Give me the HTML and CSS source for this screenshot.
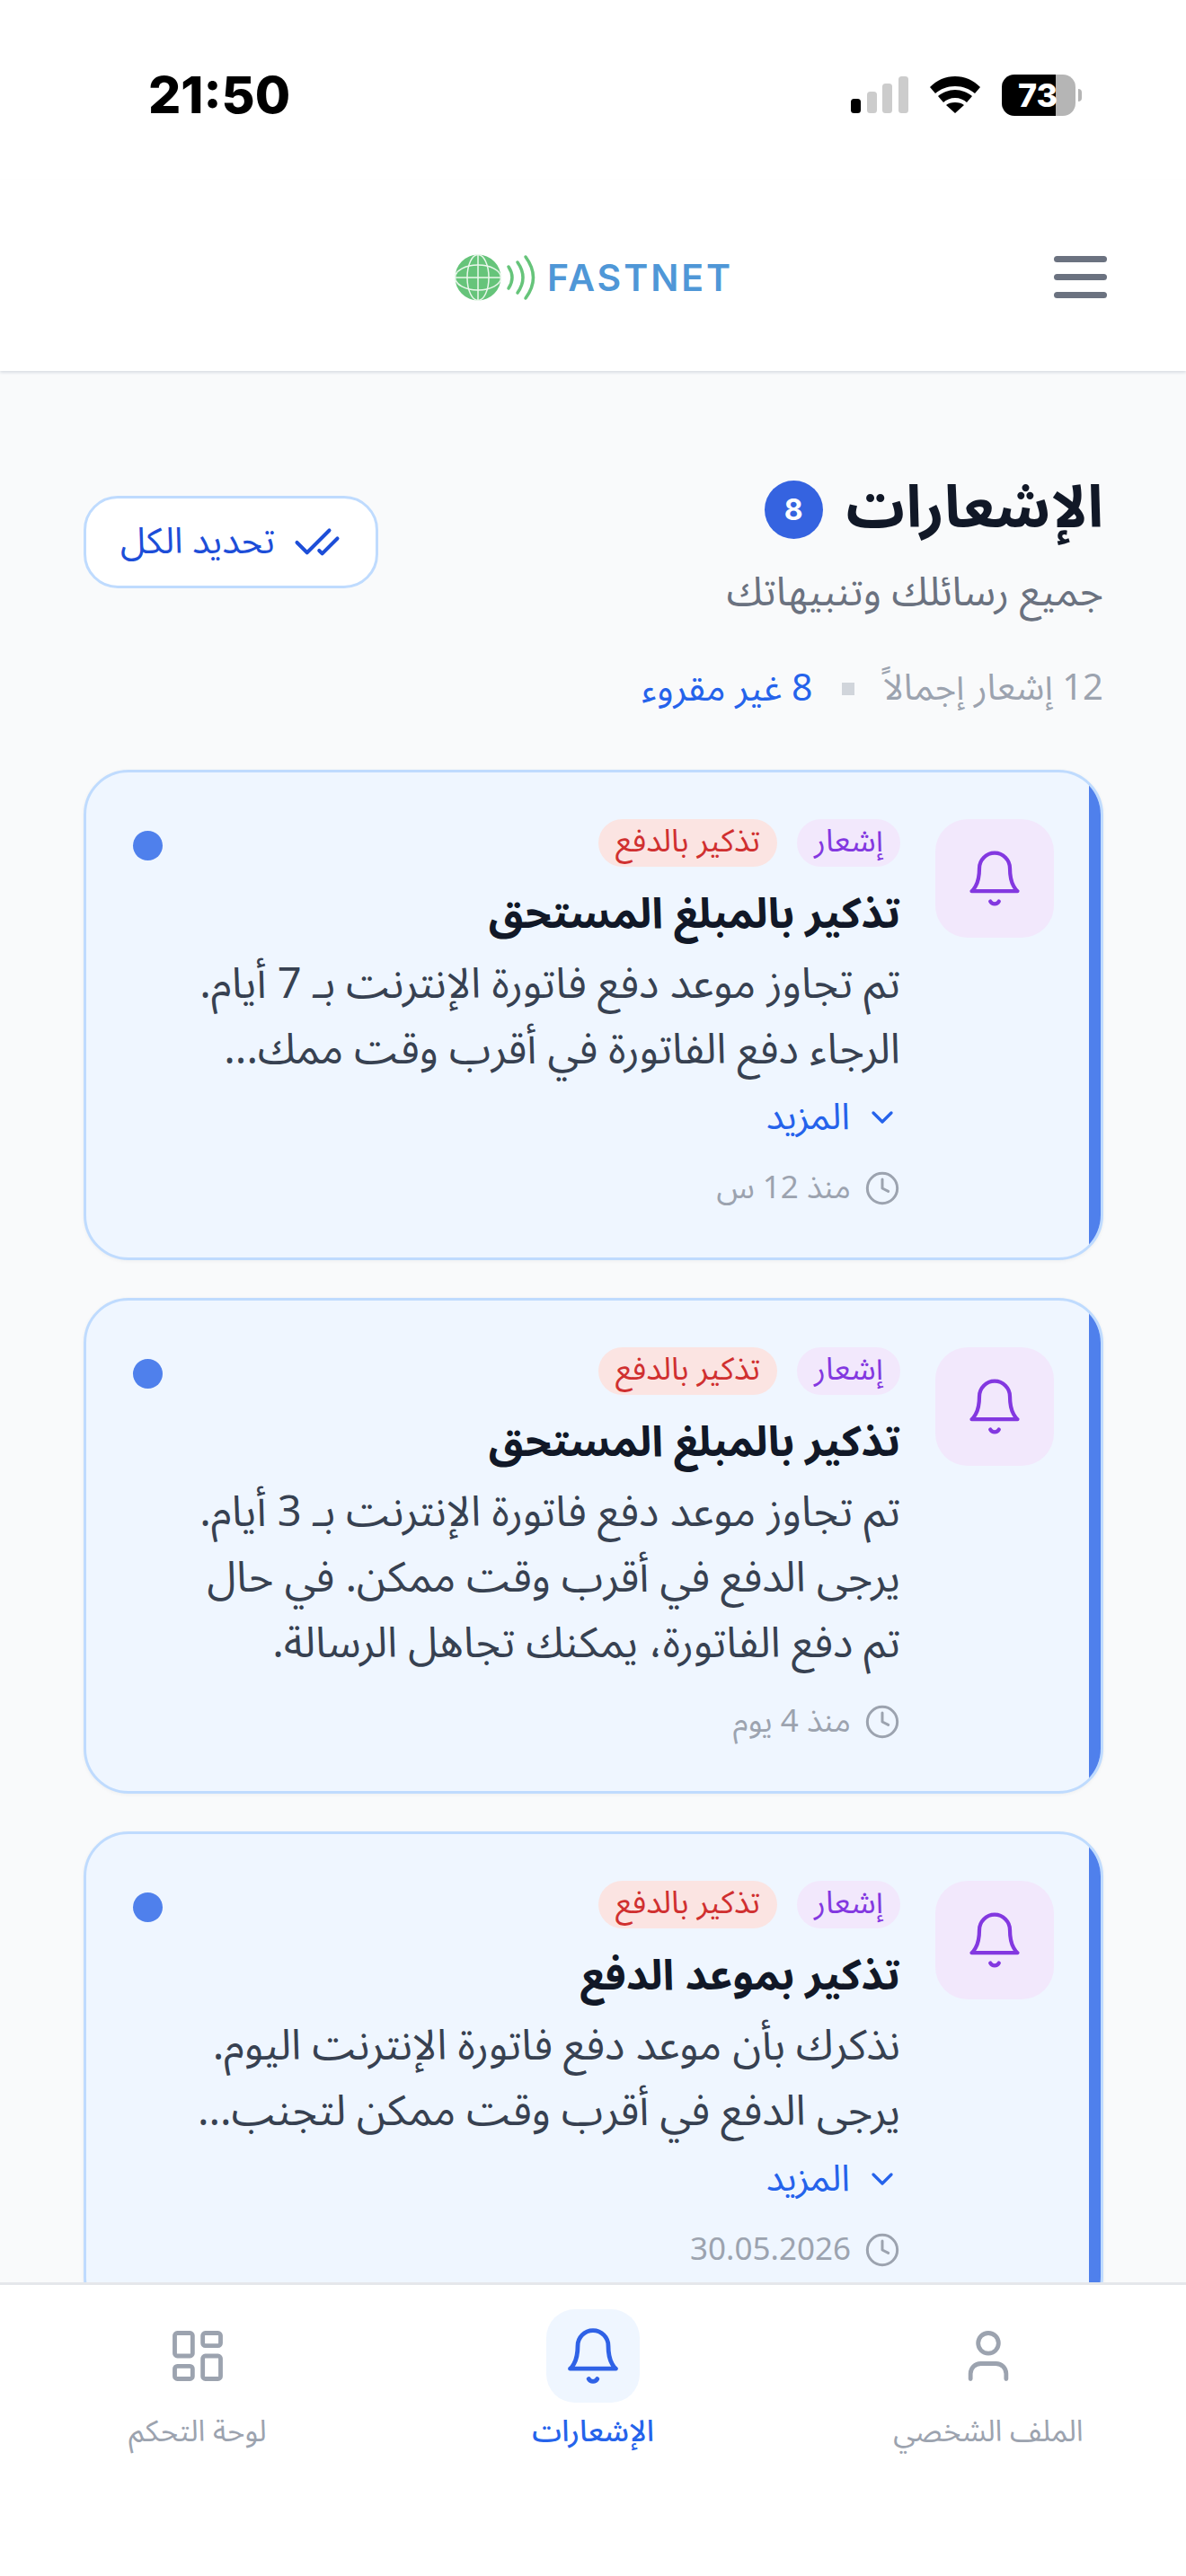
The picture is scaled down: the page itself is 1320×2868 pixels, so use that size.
FILE: index.html
```html
<!DOCTYPE html>
<html lang="ar" dir="rtl">
<head>
<meta charset="utf-8">
<title>الإشعارات</title>
<link rel="stylesheet" href="styles.css">
</head>
<body>
<div class="phone">
  <div class="status" dir="ltr">
    <span class="time">21:50</span>
    <div class="status-icons">
      <svg class="signal" width="64" height="41" viewBox="0 0 64 41"><rect x="0" y="25" width="11" height="16" rx="3.500" fill="#000"/><rect x="18" y="17" width="11" height="24" rx="3.500" fill="#ccc"/><rect x="35" y="8" width="11" height="33" rx="3.500" fill="#ccc"/><rect x="53" y="0" width="11" height="41" rx="3.500" fill="#ccc"/></svg>
      <svg class="wifi" width="56" height="41" viewBox="0 0 56 41"><path d="M28 0C17 0 8 4 0 12l6 7c6-5 13-8 22-8s16 3 22 8l6-7C48 4 39 0 28 0zM28 15c-7 0-14 3-19 7l6 7c3-3 8-5 13-5s10 2 13 5l6-7c-5-4-12-7-19-7zM28 29c-4 0-8 1-10 3l10 9 10-9c-2-2-6-3-10-3z" fill="#000"/></svg>
      <div class="battery"><span class="battery-num">73</span></div>
      <span class="battery-cap"></span>
    </div>
  </div>
  <header class="top">
    <div class="burger"><span></span><span></span><span></span></div>
    <svg class="logo" width="308" height="52" viewBox="0 0 308 52">
      <circle cx="26" cy="26" r="25.500" fill="#66c47a"/>
      <g fill="none" stroke="#eaf7ec" stroke-width="1.500"><ellipse cx="26" cy="26" rx="12" ry="25.500"/><ellipse cx="26" cy="26" rx="25.500" ry="14"/><path d="M1 26h50M26 1v50"/></g>
      <g fill="none" stroke="#66c47a" stroke-width="3.500" stroke-linecap="round"><path d="M60 14q8 12 0 24M70 9q12 17 0 34M79 3q17 23 0 46"/></g>
      <text x="103" y="41" class="logo-text" textLength="204" lengthAdjust="spacing">FASTNET</text>
    </svg>
    <span class="top-spacer"></span>
  </header>
  <main class="content">
    <div class="head">
      <div>
        <div class="title-row"><h1>الإشعارات</h1><span class="count">8</span></div>
        <p class="sub">جميع رسائلك وتنبيهاتك</p>
      </div>
      <button class="mark-all">
        <svg width="54" height="54" viewBox="0 0 24 24" fill="none" stroke="#1d4ed8" stroke-width="1.800" stroke-linecap="round" stroke-linejoin="round"><path d="M18 6 7 17l-5-5M22 10l-7.500 7.500L13 16"/></svg>
        <span>تحديد الكل</span>
      </button>
    </div>
    <div class="stats"><span class="total">12 إشعار إجمالاً</span><i class="sep"></i><span class="unread">8 غير مقروء</span></div>

    <article class="card">
      <div class="icon-box"><svg width="68" height="68" viewBox="0 0 24 24" fill="none" stroke="#8338e0" stroke-width="1.500" stroke-linecap="round" stroke-linejoin="round"><path d="M6 8a6 6 0 0 1 12 0c0 7 3 9 3 9H3s3-2 3-9M10.300 21a1.940 1.940 0 0 0 3.400 0"/></svg></div>
      <div class="body">
        <div class="tags"><span class="tag purple">إشعار</span><span class="tag red">تذكير بالدفع</span></div>
        <h2>تذكير بالمبلغ المستحق</h2>
        <p class="msg">تم تجاوز موعد دفع فاتورة الإنترنت بـ 7 أيام.<br>الرجاء دفع الفاتورة في أقرب وقت ممك...</p>
        <div class="more"><svg width="40" height="40" viewBox="0 0 24 24" fill="none" stroke="#2563eb" stroke-width="2" stroke-linecap="round" stroke-linejoin="round"><path d="M6 9l6 6 6-6"/></svg><span>المزيد</span></div>
        <div class="when"><svg width="40" height="40" viewBox="0 0 24 24" fill="none" stroke="#9ca3af" stroke-width="1.800" stroke-linecap="round" stroke-linejoin="round"><circle cx="12" cy="12" r="10"/><path d="M12 6v6l4 2"/></svg><span>منذ 12 س</span></div>
      </div>
      <span class="dot"></span>
    </article>

    <article class="card">
      <div class="icon-box"><svg width="68" height="68" viewBox="0 0 24 24" fill="none" stroke="#8338e0" stroke-width="1.500" stroke-linecap="round" stroke-linejoin="round"><path d="M6 8a6 6 0 0 1 12 0c0 7 3 9 3 9H3s3-2 3-9M10.300 21a1.940 1.940 0 0 0 3.400 0"/></svg></div>
      <div class="body">
        <div class="tags"><span class="tag purple">إشعار</span><span class="tag red">تذكير بالدفع</span></div>
        <h2>تذكير بالمبلغ المستحق</h2>
        <p class="msg">تم تجاوز موعد دفع فاتورة الإنترنت بـ 3 أيام.<br>يرجى الدفع في أقرب وقت ممكن. في حال<br>تم دفع الفاتورة، يمكنك تجاهل الرسالة.</p>
        <div class="when"><svg width="40" height="40" viewBox="0 0 24 24" fill="none" stroke="#9ca3af" stroke-width="1.800" stroke-linecap="round" stroke-linejoin="round"><circle cx="12" cy="12" r="10"/><path d="M12 6v6l4 2"/></svg><span>منذ 4 يوم</span></div>
      </div>
      <span class="dot"></span>
    </article>

    <article class="card">
      <div class="icon-box"><svg width="68" height="68" viewBox="0 0 24 24" fill="none" stroke="#8338e0" stroke-width="1.500" stroke-linecap="round" stroke-linejoin="round"><path d="M6 8a6 6 0 0 1 12 0c0 7 3 9 3 9H3s3-2 3-9M10.300 21a1.940 1.940 0 0 0 3.400 0"/></svg></div>
      <div class="body">
        <div class="tags"><span class="tag purple">إشعار</span><span class="tag red">تذكير بالدفع</span></div>
        <h2>تذكير بموعد الدفع</h2>
        <p class="msg">نذكرك بأن موعد دفع فاتورة الإنترنت اليوم.<br>يرجى الدفع في أقرب وقت ممكن لتجنب...</p>
        <div class="more"><svg width="40" height="40" viewBox="0 0 24 24" fill="none" stroke="#2563eb" stroke-width="2" stroke-linecap="round" stroke-linejoin="round"><path d="M6 9l6 6 6-6"/></svg><span>المزيد</span></div>
        <div class="when"><svg width="40" height="40" viewBox="0 0 24 24" fill="none" stroke="#9ca3af" stroke-width="1.800" stroke-linecap="round" stroke-linejoin="round"><circle cx="12" cy="12" r="10"/><path d="M12 6v6l4 2"/></svg><span>30.05.2026</span></div>
      </div>
      <span class="dot"></span>
    </article>
  </main>
  <nav class="tabs">
    <div class="tab">
      <div class="tab-icon"><svg width="68" height="68" viewBox="0 0 24 24" fill="none" stroke="#9ca3af" stroke-width="1.700" stroke-linecap="round" stroke-linejoin="round"><circle cx="12" cy="7" r="4"/><path d="M19 21v-2a4 4 0 0 0-4-4H9a4 4 0 0 0-4 4v2"/></svg></div>
      <span>الملف الشخصي</span>
    </div>
    <div class="tab active">
      <div class="tab-icon"><svg width="68" height="68" viewBox="0 0 24 24" fill="none" stroke="#2f62e6" stroke-width="1.700" stroke-linecap="round" stroke-linejoin="round"><path d="M6 8a6 6 0 0 1 12 0c0 7 3 9 3 9H3s3-2 3-9M10.300 21a1.940 1.940 0 0 0 3.400 0"/></svg></div>
      <span>الإشعارات</span>
    </div>
    <div class="tab">
      <div class="tab-icon"><svg width="68" height="68" viewBox="0 0 24 24" fill="none" stroke="#9ca3af" stroke-width="1.700" stroke-linecap="round" stroke-linejoin="round"><rect x="3" y="3" width="7" height="9" rx="1"/><rect x="14" y="3" width="7" height="5" rx="1"/><rect x="14" y="12" width="7" height="9" rx="1"/><rect x="3" y="16" width="7" height="5" rx="1"/></svg></div>
      <span>لوحة التحكم</span>
    </div>
  </nav>
</div>
</body>
</html>
```
FILE: styles.css
```css
* { box-sizing: border-box; }
html, body { margin: 0; padding: 0; }
body { font-family: "Noto Sans Arabic", "Noto Sans", "DejaVu Sans", sans-serif; background: #fff; }
.phone { width: 1320px; height: 2868px; overflow: hidden; display: flex; flex-direction: column; background: #f9fafb; }

.status { height: 200px; flex: none; background: #fff; display: flex; justify-content: space-between; align-items: flex-start; padding: 78px 116px 0 165px; }
.time { font: 800 57px/56px "Inter", sans-serif; color: #000; }
.status-icons { display: flex; align-items: center; height: 56px; }
.signal { margin-top: -1px; }
.wifi { margin: -1px 0 0 24px; }
.battery { width: 82px; height: 46px; margin-left: 24px; border-radius: 14px; background: linear-gradient(90deg, #000 0 73%, #b5b5b5 73% 100%); display: flex; align-items: center; justify-content: center; }
.battery-num { font: 800 36px/1 "Inter", sans-serif; color: #fff; margin-left: -2px; }
.battery-cap { width: 4px; height: 14px; margin-left: 3px; background: #b5b5b5; border-radius: 0 6px 6px 0; }

.top { height: 213px; flex: none; background: #fff; box-shadow: 0 2px 3px rgba(100,116,139,.2); display: grid; grid-template-columns: 1fr auto 1fr; align-items: center; padding: 0 88px; position: relative; z-index: 1; }
.logo { display: block; margin-top: 5px; direction: ltr; }
.logo-text { direction: ltr; text-anchor: start; font-family: "Inter", sans-serif; font-weight: 600; font-size: 41px; fill: #4f97d7; }
.burger { justify-self: start; display: flex; flex-direction: column; gap: 13px; margin-top: 3px; }
.burger span { display: block; width: 59px; height: 7px; border-radius: 4px; background: #6b7280; }

.content { flex: 1; min-height: 0; overflow: hidden; padding: 114px 92px 0 93px; }
.head { display: flex; justify-content: space-between; align-items: flex-start; }
.title-row { display: flex; align-items: center; gap: 26px; }
h1 { margin: 0; font-size: 65px; line-height: 80px; font-weight: 700; color: #111827; }
.count { width: 65px; height: 65px; border-radius: 50%; background: #3563e0; color: #fff; font: 700 32px/65px "Inter", sans-serif; text-align: center; }
.sub { margin: 25px 0 0; font-size: 45px; line-height: 56px; color: #6b7280; }
.mark-all { margin-top: 25px; width: 328px; height: 103px; padding: 0; border-radius: 38px; border: 3px solid #bfdbfe; background: #fff; display: flex; align-items: center; justify-content: center; gap: 20px; color: #1d4ed8; font-family: inherit; font-size: 40px; }
.stats { display: flex; align-items: center; gap: 32px; margin-top: 51px; font-size: 40px; line-height: 56px; }
.total { color: #9ca3af; }
.unread { color: #2563eb; font-size: 41px; }
.sep { width: 14px; height: 14px; background: #d1d5db; }

.card { position: relative; display: flex; gap: 39px; margin-top: 42px; padding: 52px; border: 3px solid #bfdbfe; border-radius: 50px; background: #eff6ff; box-shadow: 0 1px 4px rgba(0,0,0,.05); overflow: hidden; }
.stats + .card { margin-top: 62px; }
.card::before { content: ""; position: absolute; right: 0; top: 0; bottom: 0; width: 13px; background: #4f80ec; }
.icon-box { flex: none; width: 132px; height: 132px; border-radius: 36px; background: #f2e8fc; display: flex; align-items: center; justify-content: center; }
.body { flex: 1; min-width: 0; }
.tags { display: flex; gap: 22px; }
.tag { height: 53px; padding: 0 19px; border-radius: 27px; font-size: 35px; line-height: 50px; white-space: nowrap; }
.purple { background: #f2e8fc; color: #8338e0; }
.red { background: #fbe4e2; color: #d03030; }
h2 { margin: 22px 0 0; font-size: 47px; line-height: 62px; font-weight: 700; color: #111827; }
.msg { margin: 11px 0 0; font-size: 47px; line-height: 73px; color: #374151; white-space: nowrap; }
.more { display: flex; align-items: center; gap: 16px; margin-top: 9px; height: 58px; color: #2563eb; font-size: 41px; }
.when { display: flex; align-items: center; gap: 15px; margin-top: 25px; height: 50px; color: #9ca3af; font-size: 35px; }
.dot { position: absolute; left: 52px; top: 65px; width: 33px; height: 33px; border-radius: 50%; background: #4f80ec; }

.tabs { flex: none; height: 327px; background: #fff; border-top: 3px solid #e5e7eb; display: grid; grid-template-columns: repeat(3, 1fr); padding-top: 27px; position: relative; z-index: 1; }
.tab { display: flex; flex-direction: column; align-items: center; color: #9ca3af; font-size: 33px; line-height: 44px; gap: 11px; }
.tab-icon { width: 104px; height: 104px; border-radius: 32px; display: flex; align-items: center; justify-content: center; }
.tab.active { color: #2563eb; font-weight: 500; }
.tab.active .tab-icon { background: #eff6ff; }
```
